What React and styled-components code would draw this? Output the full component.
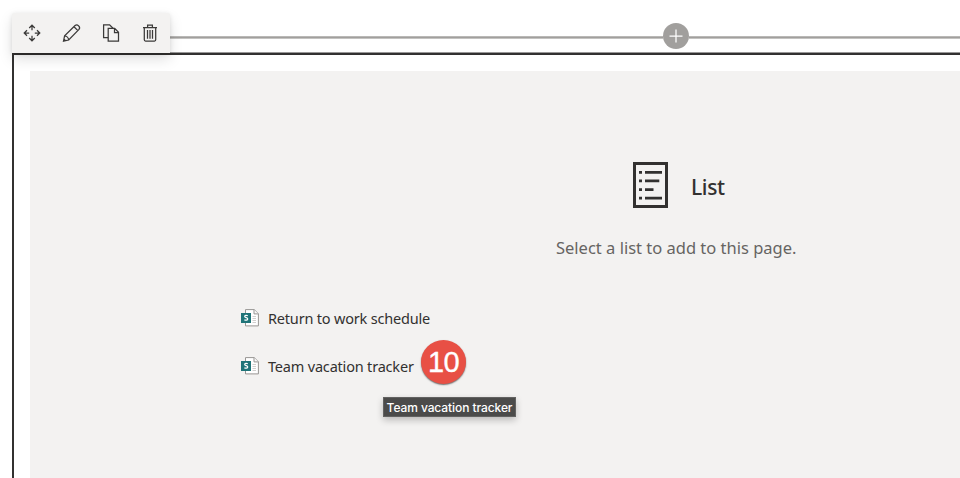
import React from 'react';
import styled, { createGlobalStyle } from 'styled-components';

const GlobalStyle = createGlobalStyle`
  *, *::before, *::after { box-sizing: border-box; }
  html, body { margin: 0; background: #fff; overflow: hidden; }
  body { font-family: "Noto Sans", "Open Sans", sans-serif; color: #323130; }
  svg { display: block; flex: none; }
`;

const Page = styled.div`
  width: 100vw;
  height: 100vh;
  overflow: hidden;
  padding: 12.5px 0 0 12px;
`;

const WebPart = styled.section`
  width: 1328px;
  display: flex;
  flex-direction: column;
`;

const Header = styled.header`
  display: flex;
  height: 40px;
`;

const Toolbar = styled.div`
  display: flex;
  width: 158px;
  height: 40px;
  background: #f3f2f1;
  border-radius: 2px 2px 0 0;
  box-shadow: 0 6px 14px rgba(0, 0, 0, 0.13), 0 1px 4px rgba(0, 0, 0, 0.1);
  z-index: 1;
`;

const ToolButton = styled.button`
  display: flex;
  align-items: center;
  justify-content: center;
  width: 39.3px;
  height: 40px;
  padding: 0 0 0 1px;
  border: 0;
  background: transparent;
  color: #3b3a39;
`;

const InsertBar = styled.div`
  display: flex;
  align-items: center;
  flex: 1;
  height: 26px;
  margin-top: 10.5px;
`;

const InsertLine = styled.span`
  flex: ${({ $width }) => ($width ? `0 0 ${$width}px` : '1')};
  height: 3px;
  margin-top: 3px;
  background: linear-gradient(#b9b8b6 1px, #a19f9d 1px 2px, #c4c3c1 2px);
`;

const InsertButton = styled.button`
  display: flex;
  align-items: center;
  justify-content: center;
  width: 26px;
  height: 26px;
  padding: 0;
  border: 0;
  border-radius: 50%;
  background: #a19f9d;
  color: #fff;
`;

const Frame = styled.div`
  height: 640px;
  padding: 16px;
  border: 2px solid #323130;
  box-shadow: 0 -0.5px 0 #323130;
`;

const Placeholder = styled.div`
  height: 100%;
  padding-top: 91px;
  background: #f3f2f1;
`;

const TitleRow = styled.div`
  display: flex;
  align-items: center;
  height: 46px;
  padding-left: 603px;
  gap: 23px;
`;

const Title = styled.h2`
  margin: 0;
  font-size: 21px;
  line-height: 28px;
  font-weight: 500;
  letter-spacing: -0.35px;
  padding-top: 4px;
`;

const Description = styled.p`
  margin: 28px 0 0 526px;
  font-size: 16.5px;
  line-height: 24px;
  color: #666462;
  white-space: nowrap;
`;

const Lists = styled.ul`
  list-style: none;
  margin: 34px 0 0 211px;
  padding: 0;
`;

const ListRow = styled.li`
  position: relative;
  display: flex;
  align-items: center;
  height: 48px;
  gap: 9px;
`;

const ListName = styled.span`
  font-size: 14.5px;
  line-height: 20px;
  letter-spacing: -0.19px;
  padding-top: 1.6px;
  white-space: nowrap;
`;

const StepBadge = styled.span`
  position: absolute;
  left: 180px;
  top: -2px;
  width: 45px;
  height: 44px;
  border-radius: 50%;
  background: #e85045;
  color: #fff;
  font: 29px/45px "Liberation Sans", Arial, sans-serif;
  letter-spacing: -0.6px;
  -webkit-text-stroke: 0.35px #fff;
  text-align: center;
  box-shadow: 0 1px 1.5px rgba(0, 0, 0, 0.55);
`;

const Tooltip = styled.span`
  position: absolute;
  left: 142px;
  top: 55px;
  width: 133px;
  height: 20px;
  background: #4b4b4a;
  border: 1px solid #626261;
  color: #fff;
  font: 500 12px/19px Inter, "Liberation Sans", sans-serif;
  letter-spacing: -0.08px;
  text-align: center;
  white-space: nowrap;
  box-shadow: 0 3px 7px rgba(0, 0, 0, 0.24);
`;

const stroke = { fill: 'none', stroke: 'currentColor', strokeWidth: 1.25 };

const MoveIcon = () => (
  <svg width="18" height="18" viewBox="0 0 18 18" {...stroke}>
    <path d="M9 1.3V6.2M6.2 4 9 1.2 11.8 4M9 11.8v4.9M6.2 14 9 16.8 11.8 14M1.3 9h4.9M4 6.2 1.2 9 4 11.8M11.8 9h4.9M14 6.2 16.8 9 14 11.8" />
  </svg>
);

const PencilIcon = () => (
  <svg width="18" height="18" viewBox="-.6 0 18 18" overflow="visible" {...stroke}>
    <path d="M.9 17.1 2 11.8 12.5 1.5c2.3-2 5.8 1.6 3.9 3.9L6.1 16zM2 11.8c2 .1 3.9 2 4.1 4.2M11.4 2.7l3.9 3.9M1.3 15l1.6 1.6" />
  </svg>
);

const CopyIcon = () => (
  <svg width="18" height="18" viewBox="0 0 18 18" {...stroke}>
    <path d="M6.2 13.7H1.6V.9h6l3.4 3.4" />
    <path d="M6.2 4.4h6.5l3.8 3.8v9H6.2zM12.5 4.6v3.9h4" />
  </svg>
);

const TrashIcon = () => (
  <svg width="18" height="18" viewBox="0 0 18 18" {...stroke}>
    <path d="M2 3.5h14M6.6 3.4V1.2h4.8v2.2M3.3 3.6v12.2q0 1.2 1.2 1.2h9q1.2 0 1.2-1.2V3.6M6.5 6v8.7M9 6v8.7M11.5 6v8.7" />
  </svg>
);

const PlusIcon = () => (
  <svg width="14" height="14" viewBox="0 0 14 14" {...stroke}>
    <path d="M7 .5v13M.5 7h13" />
  </svg>
);

const ListIcon = () => (
  <svg width="35" height="46" viewBox="0 0 35 46" fill="#323130">
    <path fillRule="evenodd" d="M0 0h35v46H0zM3 3v40h29V3z" />
    <path d="M6 9h3v2.7H6zM12 9h17v2.7H12zM6 17.6h3v2.7H6zM12 17.6h14.3v2.7H12zM6 26.2h3v2.7H6zM12 26.2h8.5v2.7H12zM6 34.8h3v2.7H6zM12 34.8h17v2.7H12z" />
  </svg>
);

const SharePointListIcon = () => (
  <svg width="18" height="18" viewBox="0 0 18 18">
    <path d="M4.5.6h8.7l4.2 4.2v12.1H4.5z" fill="#fff" stroke="#979593" strokeWidth="1" />
    <path d="M13 .7v4.2h4.3" fill="#fafafa" stroke="#979593" strokeWidth="1" />
    <path d="M11.5 7.5H15M11.5 9.5H15M11.5 11.5H15M11.5 13.5H15" stroke="#c5c3c1" strokeWidth=".8" />
    <rect x="0" y="4" width="10" height="10" fill="#1f7478" />
    <path d="M6.8 6.8c-1.2-.6-3.1-.5-3.1.7 0 1.5 3 .9 3 2.5 0 1.4-2.1 1.5-3.3.8" fill="none" stroke="#fff" strokeWidth="1.25" />
  </svg>
);

export default function App() {
  return (
    <>
      <GlobalStyle />
      <Page>
        <WebPart>
          <Header>
            <Toolbar>
              <ToolButton aria-label="Move"><MoveIcon /></ToolButton>
              <ToolButton aria-label="Edit"><PencilIcon /></ToolButton>
              <ToolButton aria-label="Duplicate"><CopyIcon /></ToolButton>
              <ToolButton aria-label="Delete"><TrashIcon /></ToolButton>
            </Toolbar>
            <InsertBar>
              <InsertLine $width={493} />
              <InsertButton aria-label="Add"><PlusIcon /></InsertButton>
              <InsertLine />
            </InsertBar>
          </Header>
          <Frame>
            <Placeholder>
              <TitleRow>
                <ListIcon />
                <Title>List</Title>
              </TitleRow>
              <Description>Select a list to add to this page.</Description>
              <Lists>
                <ListRow>
                  <SharePointListIcon />
                  <ListName>Return to work schedule</ListName>
                </ListRow>
                <ListRow>
                  <SharePointListIcon />
                  <ListName>Team vacation tracker</ListName>
                  <StepBadge>10</StepBadge>
                  <Tooltip>Team vacation tracker</Tooltip>
                </ListRow>
              </Lists>
            </Placeholder>
          </Frame>
        </WebPart>
      </Page>
    </>
  );
}
